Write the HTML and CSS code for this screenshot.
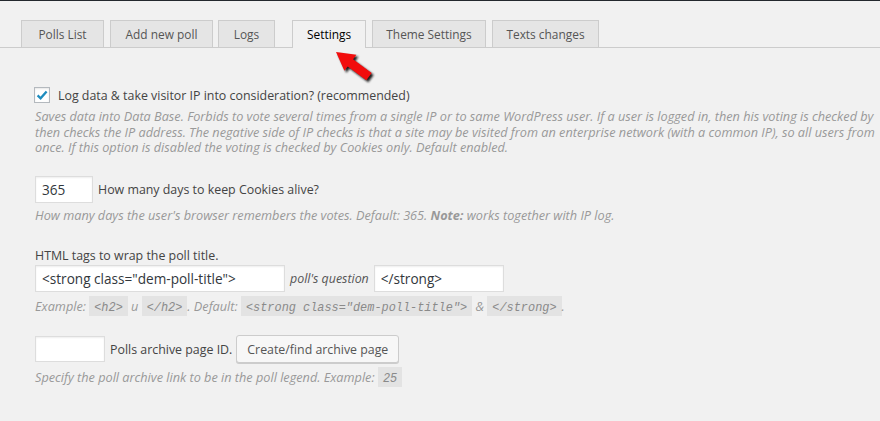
FILE: index.html
```html
<!DOCTYPE html>
<html lang="en">
<head>
<meta charset="utf-8">
<title>Settings</title>
<link rel="stylesheet" href="styles.css">
</head>
<body>
<div class="topbar"></div>
<nav class="tabs">
  <a class="tab tab-polls">Polls List</a>
  <a class="tab tab-add">Add new poll</a>
  <a class="tab tab-logs">Logs</a>
  <a class="tab tab-settings active">Settings</a>
  <a class="tab tab-theme">Theme Settings</a>
  <a class="tab tab-texts">Texts changes</a>
</nav>
<svg class="arrow" width="52" height="44" viewBox="0 0 52 44">
  <defs><filter id="blur" x="-20%" y="-20%" width="140%" height="140%"><feGaussianBlur stdDeviation="0.9"/></filter></defs>
  <polygon points="10,10 30.4,12.8 27.1,17.2 45.7,31 40.3,38.2 21.7,24.4 18.4,28.8" fill="#1a1a1a" filter="url(#blur)"/>
  <polygon points="8,8 28.4,10.8 25.1,15.2 43.7,29 38.3,36.2 19.7,22.4 16.4,26.8" fill="#f20d0d"/>
</svg>
<main class="content">
  <label class="check-row">
    <span class="checkbox"><svg width="14" height="14" viewBox="0 0 14 14"><path d="M2.6 7.4 L5.6 10.3 L11.6 3.4" fill="none" stroke="#1e8cbe" stroke-width="2.3"/></svg></span>
    <span class="label-text">Log data &amp; take visitor IP into consideration? (recommended)</span>
  </label>
  <div class="desc desc-block">
    <span class="line">Saves data into Data Base. Forbids to vote several times from a single IP or to same WordPress user. If a user is logged in, then his voting is checked by</span>
    <span class="line">then checks the IP address. The negative side of IP checks is that a site may be visited from an enterprise network (with a common IP), so all users from</span>
    <span class="line">once. If this option is disabled the voting is checked by Cookies only. Default enabled.</span>
  </div>

  <div class="field-row row-days">
    <input class="input input-days" type="text" value="365">
    <span class="label-text">How many days to keep Cookies alive?</span>
  </div>
  <p class="desc desc-days">How many days the user's browser remembers the votes. Default: 365. <b>Note:</b> works together with IP log.</p>

  <div class="label-text title-label">HTML tags to wrap the poll title.</div>
  <div class="field-row row-tags">
    <input class="input input-open" type="text" value='&lt;strong class="dem-poll-title"&gt;'>
    <em class="question">poll's question</em>
    <input class="input input-close" type="text" value="&lt;/strong&gt;">
  </div>
  <p class="desc code-line">Example: <code>&lt;h2&gt;</code> u <code>&lt;/h2&gt;</code>. Default: <code>&lt;strong class="dem-poll-title"&gt;</code> &amp; <code>&lt;/strong&gt;</code>.</p>

  <div class="field-row row-archive">
    <input class="input input-archive" type="text" value="">
    <span class="label-text">Polls archive page ID.</span>
    <button class="button" type="button">Create/find archive page</button>
  </div>
  <p class="desc code-line">Specify the poll archive link to be in the poll legend. Example: <code>25</code></p>
</main>
</body>
</html>
```
FILE: styles.css
```css
html, body {
  margin: 0;
  padding: 0;
  overflow: hidden;
  background: #f1f1f1;
}
body {
  font-family: "Open Sans", "Noto Sans", sans-serif;
  font-size: 12.4px;
  color: #444;
  position: relative;
  min-height: 421px;
}
.topbar {
  height: 1px;
  background: #23282d;
}

/* Tabs */
.tabs {
  display: flex;
  align-items: flex-end;
  padding: 19px 0 0 21px;
  border-bottom: 1px solid #ccc;
  height: 27px;
}
.tab {
  box-sizing: border-box;
  height: 27px;
  display: flex;
  align-items: center;
  justify-content: center;
  border: 1px solid #ccc;
  border-bottom: none;
  background: #e5e5e5;
  color: #555;
  font-size: 11.9px;
  text-decoration: none;
  white-space: nowrap;
}
.tab-polls { width: 83px; }
.tab-add { width: 103px; margin-left: 6px; }
.tab-logs { width: 57px; margin-left: 5px; }
.tab-settings { width: 74px; margin-left: 17px; }
.tab-theme { width: 114px; margin-left: 6px; }
.tab-texts { width: 107px; margin-left: 6px; }
.tab.active {
  background: #f1f1f1;
  color: #000;
  height: 28px;
  margin-bottom: -1px;
  padding-bottom: 1px;
}

.arrow {
  position: absolute;
  left: 328px;
  top: 44px;
}

/* Content */
.content {
  padding-left: 35px;
}
.label-text {
  color: #444;
  white-space: nowrap;
}
.check-row {
  display: flex;
  align-items: center;
  gap: 8px;
  height: 16px;
  margin-top: 39px;
  margin-left: -1px;
}
.checkbox {
  box-sizing: border-box;
  width: 16px;
  height: 16px;
  border: 1px solid #b4b9be;
  background: #fff;
  box-shadow: inset 0 1px 2px rgba(0,0,0,.1);
  display: flex;
  align-items: center;
  justify-content: center;
}
.checkbox svg { display: block; }

.desc {
  font-style: italic;
  font-size: 12.7px;
  color: #999;
  line-height: 15.5px;
  margin: 0;
  white-space: nowrap;
}
.desc b { font-weight: 700; color: #999; }
.desc-block { margin-top: 6px; }
.desc-block .line { display: block; }

.field-row {
  display: flex;
  align-items: center;
  gap: 5px;
}
.input {
  box-sizing: border-box;
  height: 27px;
  border: 1px solid #ddd;
  background: #fff;
  box-shadow: inset 0 1px 2px rgba(0,0,0,.07);
  font-family: "Open Sans", "Noto Sans", sans-serif;
  font-size: 13.6px;
  color: #32373c;
  padding: 0 6px;
  margin: 0;
  outline: none;
}
.row-days { margin-top: 20px; }
.input-days { width: 58px; }
.desc-days { margin-top: 5px; }

.title-label {
  display: block;
  line-height: 16px;
  margin-top: 25px;
}
.row-tags { margin-top: 1px; }
.input-open { width: 250px; }
.input-close { width: 130px; }
.question {
  font-style: italic;
  color: #555;
}

.code-line {
  line-height: 20px;
  margin-top: 4px;
}
code {
  display: inline-block;
  font-family: "Liberation Mono", "DejaVu Sans Mono", monospace;
  font-style: italic;
  font-size: 11.9px;
  line-height: 16px;
  padding: 4px 5px 0;
  background: #e3e3e3;
  color: #8a8a8a;
  vertical-align: baseline;
}

.row-archive { margin-top: 19px; }
.input-archive { width: 70px; height: 26px; }
.button {
  box-sizing: border-box;
  height: 28px;
  padding: 0 10px;
  margin-left: -1px;
  border: 1px solid #ccc;
  border-radius: 3px;
  background: #f7f7f7;
  box-shadow: 0 1px 0 #ccc;
  color: #555;
  font-family: "Open Sans", "Noto Sans", sans-serif;
  font-size: 12.35px;
  white-space: nowrap;
}
```
